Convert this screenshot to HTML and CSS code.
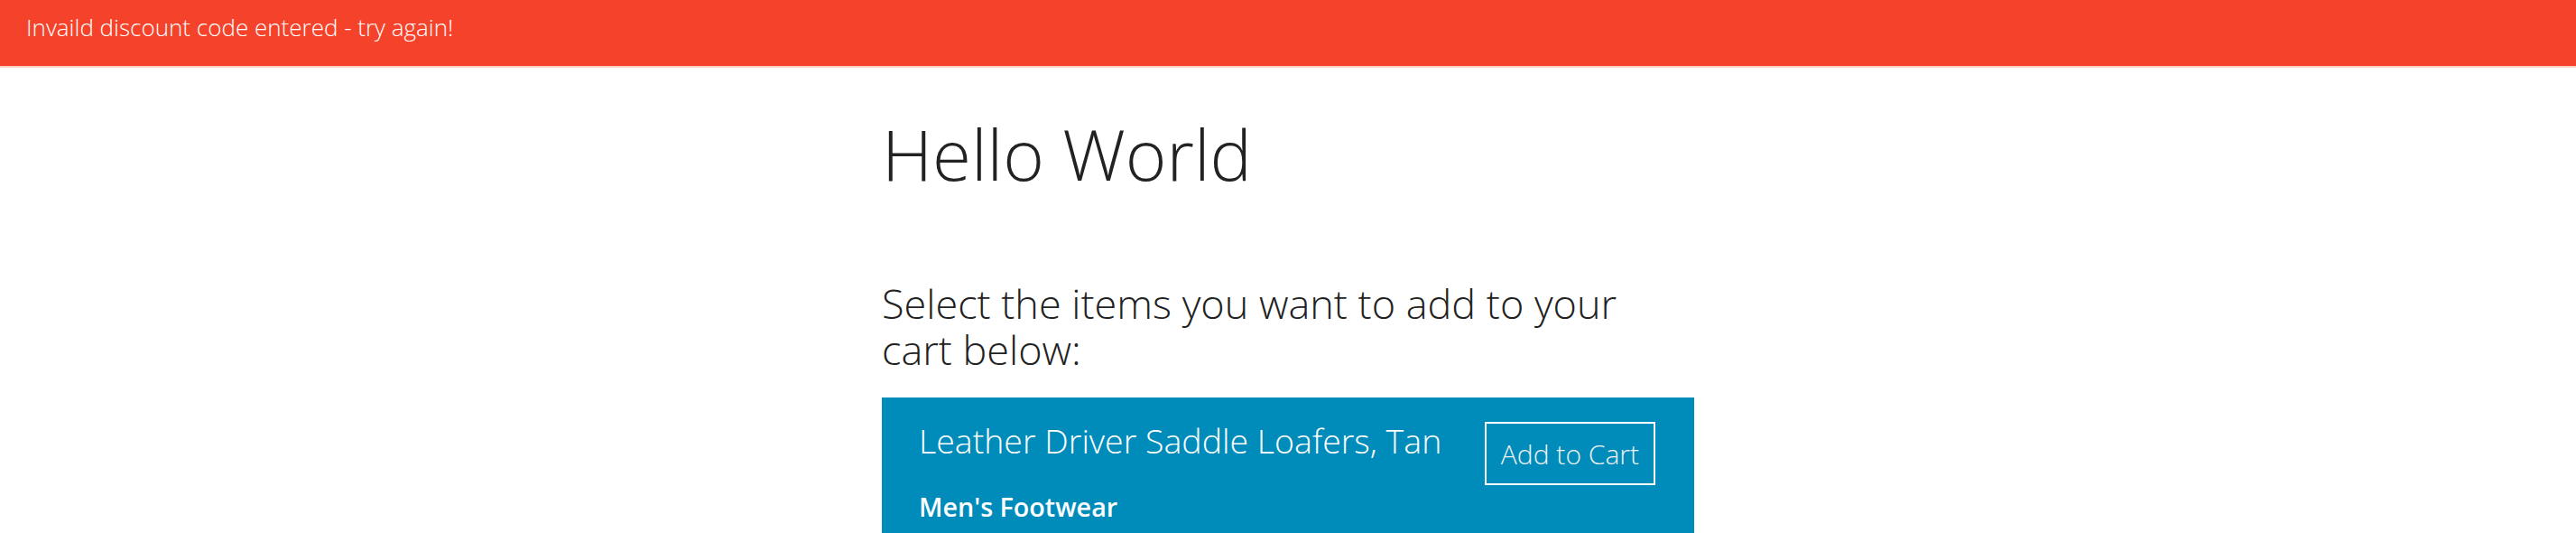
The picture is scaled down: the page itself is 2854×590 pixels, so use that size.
FILE: index.html
```html
<!DOCTYPE html>
<html lang="en">
<head>
<meta charset="utf-8">
<title>Hello World</title>
<link rel="stylesheet" href="styles.css">
</head>
<body>
<div class="alert">Invaild discount code entered - try again!</div>
<main class="container">
  <h1 class="title">Hello World</h1>
  <p class="intro">Select the items you want to add to your cart below:</p>
  <section class="product">
    <div class="product-row">
      <h2 class="product-name">Leather Driver Saddle Loafers, Tan</h2>
      <button class="add-btn" type="button">Add to Cart</button>
    </div>
    <div class="product-cat">Men's Footwear</div>
  </section>
</main>
</body>
</html>
```
FILE: styles.css
```css
html, body {
  margin: 0;
  padding: 0;
  background: #ffffff;
  font-family: "Open Sans", "Liberation Sans", sans-serif;
  color: #222222;
}

.alert {
  box-sizing: border-box;
  height: 73px;
  padding: 12px 0 0 29px;
  background: #f4432a;
  color: #ffffff;
  font-size: 26px;
  font-weight: 300;
  line-height: normal;
  box-shadow: 0 2px 0 rgba(244, 67, 42, 0.25);
}

.container {
  width: 900px;
  margin: 0 auto;
}

.title {
  margin: 44px 0 0 0;
  font-size: 78px;
  font-weight: 300;
  line-height: normal;
  color: #222222;
}

.intro {
  max-width: 860px;
  margin: 87px 0 0 0;
  font-size: 45px;
  font-weight: 300;
  line-height: 51px;
  color: #222222;
}

.product {
  margin-top: 28px;
  padding: 22px 43px 30px 41px;
  background: #008cba;
  color: #ffffff;
}

.product-row {
  display: flex;
  justify-content: space-between;
  align-items: flex-start;
}

.product-name {
  margin: 0;
  font-size: 37.5px;
  font-weight: 300;
  line-height: normal;
}

.add-btn {
  box-sizing: border-box;
  height: 70px;
  margin-top: 5px;
  padding: 0 16px;
  display: flex;
  align-items: center;
  background: transparent;
  border: 2px solid #ffffff;
  color: #f0f0f0;
  font-family: inherit;
  font-size: 30px;
  font-weight: 300;
  cursor: pointer;
}

.product-cat {
  margin-top: 4px;
  font-size: 28.7px;
  font-weight: 600;
  line-height: normal;
}
```
